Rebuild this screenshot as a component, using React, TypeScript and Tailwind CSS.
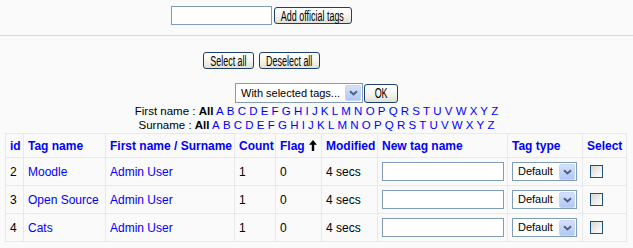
const letters = "ABCDEFGHIJKLMNOPQRSTUVWXYZ".split("")

const rows = [
  { id: 2, name: "Moodle" },
  { id: 3, name: "Open Source" },
  { id: 4, name: "Cats" },
]

function XpButton({ label, className }: { label: string; className: string }) {
  return (
    <button
      className={`flex items-center justify-center rounded-[3px] border border-[#1c3f6e] bg-gradient-to-b from-white via-[#f6f5f0] to-[#e3e1d6] text-black ${className}`}
    >
      <span className="inline-block scale-x-[0.64] whitespace-nowrap text-[14px] leading-none">{label}</span>
    </button>
  )
}

function XpSelect({ label, className }: { label: string; className: string }) {
  return (
    <div className={`flex items-center justify-between border border-[#7f9db9] bg-white ${className}`}>
      <span className="whitespace-nowrap pl-[5px] text-[11px] leading-none text-black">{label}</span>
      <span className="mr-px flex h-[16px] w-[16px] items-center justify-center rounded-[2px] border border-[#c6d5fb] bg-gradient-to-b from-[#d6e1fb] to-[#b3c7f3]">
        <svg width="9" height="6" viewBox="0 0 9 6">
          <path d="M1 1.2 L4.5 4.5 L8 1.2" fill="none" stroke="#4d6185" strokeWidth="2" />
        </svg>
      </span>
    </div>
  )
}

function Checkbox() {
  return (
    <span className="ml-[3px] block h-[13px] w-[13px] border border-[#1c5180] bg-gradient-to-br from-[#d8d8d2] to-white" />
  )
}

function FlagArrow() {
  return (
    <svg width="8" height="11" viewBox="0 0 8 11" className="ml-[4px]">
      <path d="M4 0 L0 4.8 L2.8 4.8 L2.8 11 L5.2 11 L5.2 4.8 L8 4.8 Z" fill="#000" />
    </svg>
  )
}

function LetterLine({ label }: { label: string }) {
  return (
    <div className="flex h-[14px] items-center justify-center whitespace-pre text-[11.5px] leading-none text-black">
      <span>{label} : </span>
      <span className="font-bold">All</span>
      {letters.map((l) => (
        <span key={l}>
          {" "}
          <a className="text-[#0000ff]">{l}</a>
        </span>
      ))}
    </div>
  )
}

export default function App() {
  const th = "border border-[#e9e9e9] px-[4px] text-left align-middle font-bold text-[#0000ff]"
  const td = "border border-[#e9e9e9] px-[4px] align-middle"

  return (
    <div className="h-[248px] w-[633px] overflow-hidden bg-[#fafafa] font-['Liberation_Sans',Arial,sans-serif] text-[12px] text-black">
      <div className="flex w-[522px] items-center justify-center pt-[6px]">
        <input className="h-[19px] w-[101px] border border-[#7f9db9] bg-white outline-none" />
        <XpButton label="Add official tags" className="ml-[2px] h-[17px] w-[78px]" />
      </div>

      <div className="mt-[10px] h-px w-full bg-[#dadada]" />

      <div className="mt-[16px] flex w-[522px] items-center justify-center gap-[5px]">
        <XpButton label="Select all" className="h-[17px] w-[51px]" />
        <XpButton label="Deselect all" className="h-[17px] w-[61px]" />
      </div>

      <div className="mt-[14px] flex items-center justify-center">
        <XpSelect label="With selected tags..." className="h-[20px] w-[128px]" />
        <XpButton label="OK" className="ml-px h-[19px] w-[34px]" />
      </div>

      <div className="mt-[2px]">
        <LetterLine label="First name" />
        <LetterLine label="Surname" />
      </div>

      <table className="ml-[5px] w-[621px] table-fixed border-collapse">
        <colgroup>
          <col className="w-[18px]" />
          <col className="w-[82px]" />
          <col className="w-[129px]" />
          <col className="w-[41px]" />
          <col className="w-[46px]" />
          <col className="w-[56px]" />
          <col className="w-[130px]" />
          <col className="w-[75px]" />
          <col className="w-[44px]" />
        </colgroup>
        <thead>
          <tr className="h-[24px]">
            <th className={th}>id</th>
            <th className={th}>Tag name</th>
            <th className={`${th} whitespace-nowrap`}>First name / Surname</th>
            <th className={th}>Count</th>
            <th className={th}>
              <span className="flex items-center">
                Flag
                <FlagArrow />
              </span>
            </th>
            <th className={th}>Modified</th>
            <th className={th}>New tag name</th>
            <th className={th}>Tag type</th>
            <th className={th}>Select</th>
          </tr>
        </thead>
        <tbody>
          {rows.map((r) => (
            <tr key={r.id} className="h-[28px]">
              <td className={td}>{r.id}</td>
              <td className={`${td} whitespace-nowrap`}>
                <a className="text-[#0000ff]">{r.name}</a>
              </td>
              <td className={td}>
                <a className="text-[#0000ff]">Admin User</a>
              </td>
              <td className={td}>1</td>
              <td className={td}>0</td>
              <td className={td}>4 secs</td>
              <td className={td}>
                <input className="block h-[19px] w-[122px] border border-[#7f9db9] bg-white outline-none" />
              </td>
              <td className={td}>
                <XpSelect label="Default" className="h-[19px] w-[65px]" />
              </td>
              <td className={td}>
                <Checkbox />
              </td>
            </tr>
          ))}
        </tbody>
      </table>
    </div>
  )
}
